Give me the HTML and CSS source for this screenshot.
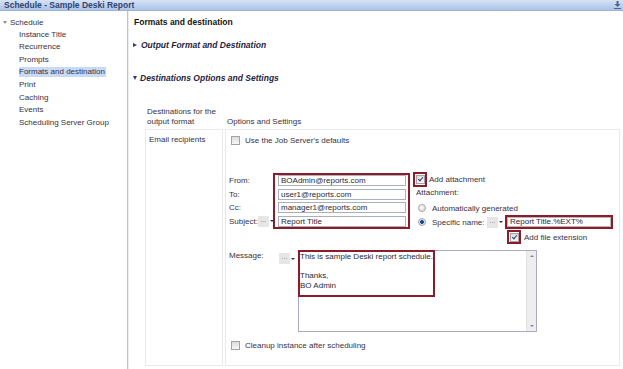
FILE: index.html
```html
<!DOCTYPE html>
<html>
<head>
<meta charset="utf-8">
<title>Schedule - Sample Deski Report</title>
<link rel="stylesheet" href="styles.css">
</head>
<body>
<div class="window">
  <div class="titlebar">
    <span class="title">Schedule - Sample Deski Report</span>
    <svg class="pin" width="7" height="8" viewBox="0 0 7 8"><path d="M2.5 0h2v3h2L3.5 6 0.5 3h2z" fill="#4f6693"/><rect x="0" y="7" width="7" height="1" fill="#4f6693"/></svg>
  </div>
  <div class="content">
    <nav class="sidebar">
      <div class="tree-root"><span class="caret-down"></span>Schedule</div>
      <ul class="tree">
        <li>Instance Title</li>
        <li>Recurrence</li>
        <li>Prompts</li>
        <li class="sel"><span>Formats and destination</span></li>
        <li>Print</li>
        <li>Caching</li>
        <li>Events</li>
        <li>Scheduling Server Group</li>
      </ul>
    </nav>
    <main class="main">
      <div class="page-title">Formats and destination</div>
      <div class="section out"><span class="tri-right"></span>Output Format and Destination</div>
      <div class="section dest"><span class="tri-down"></span>Destinations Options and Settings</div>
      <div class="dest-table">
        <div class="th">Destinations for the<br>output format</div>
        <div class="th">Options and Settings</div>
        <div class="td td-left">Email recipients</div>
        <div class="td td-opts">
          <div class="check-row first"><span class="cb"></span><span class="cb-label">Use the Job Server's defaults</span></div>
          <div class="email">
            <div class="addr-labels">
              <div class="lbl">From:</div>
              <div class="lbl">To:</div>
              <div class="lbl">Cc:</div>
              <div class="lbl subj"><span class="subj-text">Subject:</span><span class="picker"><span class="dots">...</span><span class="arrow"></span></span></div>
            </div>
            <div class="redbox addr-fields">
              <div class="field">BOAdmin@reports.com</div>
              <div class="field">user1@reports.com</div>
              <div class="field">manager1@reports.com</div>
              <div class="field">Report Title</div>
            </div>
            <div class="attach">
              <div class="att-row"><span class="redsq"><span class="cb checked"></span></span><span class="att-label">Add attachment</span></div>
              <div class="att-title">Attachment:</div>
              <div class="radio-row r1"><span class="radio"></span><span class="radio-label">Automatically generated</span></div>
              <div class="radio-row"><span class="radio on"></span><span class="radio-label fixed">Specific name:</span><span class="picker"><span class="dots">...</span><span class="arrow"></span></span><span class="redbox name-box"><span class="name-field">Report Title.%EXT%</span></span></div>
              <div class="att-row ext"><span class="redsq"><span class="cb checked"></span></span><span class="att-label wide">Add file extension</span></div>
            </div>
          </div>
          <div class="message">
            <div class="msg-label">Message:</div>
            <span class="picker msg-picker"><span class="dots">...</span><span class="arrow"></span></span>
            <div class="textarea">
              <div class="ta-body">
                <div class="redbox msg-text">This is sample Deski report schedule.<br><br>Thanks,<br>BO Admin</div>
              </div>
              <div class="ta-scroll"><span class="sc-up"></span><span class="sc-down"></span></div>
            </div>
          </div>
          <div class="check-row cleanup"><span class="cb"></span><span class="cb-label">Cleanup instance after scheduling</span></div>
        </div>
      </div>
    </main>
  </div>
</div>
</body>
</html>
```
FILE: styles.css
```css
* { box-sizing: border-box; margin: 0; padding: 0; }
html, body { width: 623px; height: 369px; overflow: hidden; background: #fff; }
body {
  font-family: "Liberation Sans", Arial, sans-serif;
  font-size: 8px;
  line-height: 11px;
  color: #3a2f42;
}
.window { display: flex; flex-direction: column; height: 369px; }

/* title bar */
.titlebar {
  height: 11px; flex: none;
  display: flex; align-items: center; justify-content: space-between;
  padding: 0 2px 0 4px;
  background: linear-gradient(#d6e2f4, #adc3e6);
  border-bottom: 1px solid #9ab1d8;
}
.title { font-weight: bold; font-size: 8.5px; line-height: 10px; color: #2f4472; }
.pin { display: block; }

.content { flex: 1; display: flex; min-height: 0; }

/* sidebar tree */
.sidebar {
  width: 128px; flex: none;
  border-right: 1px solid #c3c3c3;
  box-shadow: 1px 0 0 #ececec;
  padding-top: 5px;
}
.tree-root { display: flex; align-items: center; height: 12.6px; padding-left: 3px; }
.caret-down {
  width: 0; height: 0;
  border-left: 2.5px solid transparent; border-right: 2.5px solid transparent;
  border-top: 3px solid #8d8d8d;
  margin-right: 3px;
}
.tree { list-style: none; padding-left: 19px; }
.tree li { height: 12.6px; line-height: 12.6px; }
.tree .sel span { background: #c8dbf6; padding: 0 1px 1px 0; }

/* main */
.main { flex: 1; min-width: 0; padding: 5px 0 0 6px; }
.page-title { font-weight: bold; font-size: 8.5px; line-height: 12px; color: #141414; }
.section {
  display: flex; align-items: center;
  font-weight: bold; font-style: italic; font-size: 8.5px; line-height: 12px;
  color: #1e2342; margin-left: -1px;
}
.section.out { margin-top: 11px; }
.section.dest { margin-top: 21px; }
.tri-right {
  width: 0; height: 0;
  border-top: 2.5px solid transparent; border-bottom: 2.5px solid transparent;
  border-left: 4px solid #2d3f70;
  margin-right: 4px;
}
.tri-down {
  width: 0; height: 0;
  border-left: 2.5px solid transparent; border-right: 2.5px solid transparent;
  border-top: 4px solid #2d3f70;
  margin-right: 3px;
}

/* destinations table */
.dest-table {
  display: grid;
  grid-template-columns: 78px 395px;
  column-gap: 2px; row-gap: 2px;
  margin: 23px 0 0 11px;
}
.th { align-self: end; line-height: 10px; padding-left: 2px; }
.td { border: 1px solid #e9e9e9; height: 237px; }
.td-left { padding: 4px 0 0 3px; }
.td-opts { padding-top: 5px; }

/* checkboxes */
.check-row { display: flex; align-items: center; height: 11px; padding-left: 5px; }
.cb {
  display: inline-block; width: 9px; height: 9px; flex: none;
  border: 1px solid #a3a3a3;
  background: linear-gradient(#dcdcdc, #f8f8f8);
  position: relative;
}
.cb.checked::after {
  content: ""; position: absolute; left: 2px; top: 0px;
  width: 2px; height: 4px;
  border-right: 1.5px solid #2c3f78; border-bottom: 1.5px solid #2c3f78;
  transform: rotate(40deg);
}
.cb-label { margin-left: 5px; }

/* email block */
.email { display: flex; align-items: flex-start; margin-top: 27px; padding-left: 3px; }
.addr-labels { width: 44px; padding-top: 2px; display: flex; flex-direction: column; gap: 2.5px; }
.lbl { height: 11px; line-height: 11px; }
.lbl.subj { display: flex; align-items: center; }
.subj-text { width: 30px; }
.redbox { border: 2px solid #8e1b2b; }
.addr-fields { width: 137px; padding: 0 2px 0 3px; display: flex; flex-direction: column; gap: 2.5px; }
.field {
  height: 11px; border: 1px solid #a9b0ba; background: #fff;
  padding-left: 2px; line-height: 9px; color: #2c2734;
  white-space: nowrap; overflow: hidden;
}

.picker { display: flex; align-items: center; flex: none; }
.dots {
  width: 11px; height: 11px; background: #e6e6e6;
  color: #777; font-size: 7px; line-height: 8px; text-align: center;
}
.arrow {
  width: 0; height: 0; margin-left: 1px;
  border-left: 2px solid transparent; border-right: 2px solid transparent;
  border-top: 2px solid #333;
}

/* attachment */
.attach { margin: -1px 0 0 3px; display: flex; flex-direction: column; }
.att-row { display: flex; align-items: center; }
.redsq {
  width: 14px; height: 15px; border: 2px solid #8e1b2b;
  display: flex; align-items: center; justify-content: center; flex: none;
}
.att-label { margin-left: 2px; }
.att-label.wide { margin-left: 3px; }
.att-title { padding-left: 3px; line-height: 12px; height: 12px; }
.radio-row { display: flex; align-items: center; height: 14px; padding-left: 5px; white-space: nowrap; }
.radio-row.r1 { margin-top: 2px; }
.radio {
  width: 8px; height: 8px; border-radius: 50%; flex: none;
  border: 1px solid #a5a5a5;
  background: radial-gradient(circle at 40% 35%, #fafafa, #d6d6d6);
}
.radio.on { background: radial-gradient(circle, #1e4a8c 0 1.6px, #dfe6ef 2.2px); }
.radio-label { margin-left: 6px; }
.radio-label.fixed { width: 55px; flex: none; }
.name-box { width: 108px; height: 14px; margin-left: 2px; display: flex; flex: none; }
.name-field {
  flex: 1; border: 1px solid #b7b7b7; padding-left: 2px;
  line-height: 8px; color: #2c2734; white-space: nowrap;
}
.att-row.ext { margin: 1px 0 0 94px; }
.att-row.ext .redsq { height: 14px; }

/* message */
.message { display: flex; align-items: flex-start; margin-top: 6px; padding-left: 3px; }
.msg-label { width: 50px; }
.msg-picker { margin-top: 3px; }
.textarea {
  width: 239px; height: 82px; margin-left: 3px;
  border: 1px solid #abaac4; display: flex; background: #fff;
}
.ta-body { flex: 1; }
.msg-text {
  width: 137px; height: 47px; margin: -1px 0 0 -1px;
  line-height: 9.5px; color: #2c2734; padding-left: 0;
}
.ta-scroll {
  width: 10px; background: #eeeeee; border-left: 1px solid #e2e2e2;
  display: flex; flex-direction: column; justify-content: space-between; align-items: center;
  padding: 4px 0 4px;
}
.sc-up {
  width: 0; height: 0;
  border-left: 2px solid transparent; border-right: 2px solid transparent;
  border-bottom: 2px solid #888;
}
.sc-down {
  width: 0; height: 0;
  border-left: 2px solid transparent; border-right: 2px solid transparent;
  border-top: 2px solid #888;
}
.check-row.cleanup { margin-top: 8px; }
```
